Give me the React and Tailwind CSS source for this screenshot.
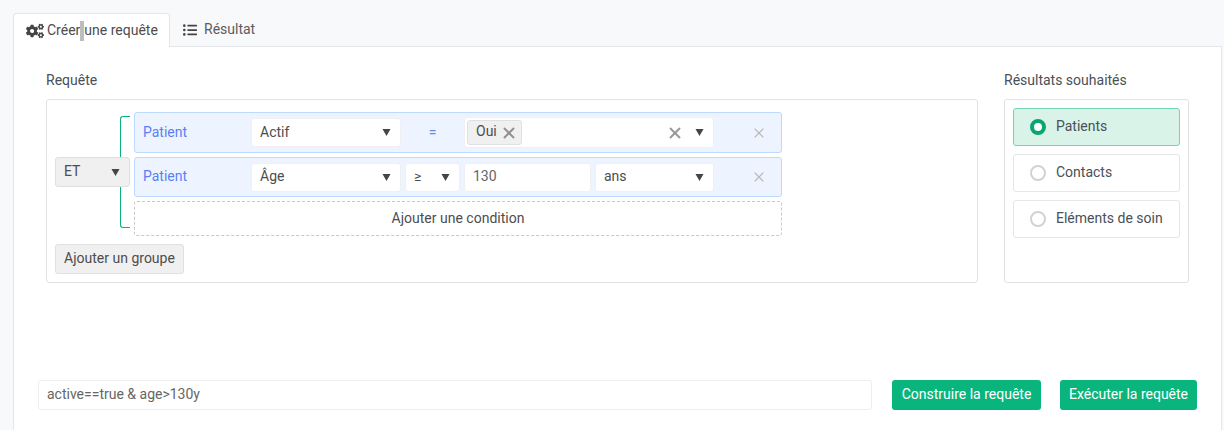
import { FaCogs, FaListUl } from 'react-icons/fa';
import { X } from 'lucide-react';

function Caret({ className = "" }) {
  return (
    <svg width="9" height="7" viewBox="0 0 9 7" className={`shrink-0 ${className}`}>
      <path d="M0.5 0h8L4.5 7z" fill="#454545" />
    </svg>
  );
}

function Select({ label, className = "" }) {
  return (
    <div className={`h-[29px] shrink-0 bg-white border border-[#eef0f3] rounded-[3px] flex items-center justify-between pl-2 pr-[9px] text-[#4d4d4d] ${className}`}>
      <span className="pb-px">{label}</span>
      <Caret />
    </div>
  );
}

function Remove() {
  return (
    <div className="w-[67px] shrink-0 flex items-center pl-[37px]">
      <X size={16} strokeWidth={1.7} className="text-[#b8b8b8]" />
    </div>
  );
}

function Radio({ label, active }) {
  return (
    <div className={`h-[38px] rounded-[3px] border flex items-center pl-4 gap-[10px] text-[#495057] ${active ? 'bg-[#d9f3e9] border-[#74d6b0]' : 'bg-white border-[#e4e6ea]'}`}>
      <span className={`w-4 h-4 rounded-full bg-white ${active ? 'border-[4px] border-[#0aa574]' : 'border-2 border-[#d2d2d2]'}`} />
      <span className="pb-[2px]">{label}</span>
    </div>
  );
}

export default function App() {
  return (
    <div className="w-[1224px] h-[430px] overflow-hidden bg-[#f8f9fb] pt-[13px] pl-[13px] text-[14px] font-['Roboto',sans-serif] text-[#495057]">
      {/* Tabs */}
      <div className="flex h-[34px] relative z-10 w-[1209px] border-b border-[#e4e6ea]">
        <div className="h-[34px] w-[157px] bg-white border border-b-0 border-[#e4e6ea] rounded-t-[4px] flex items-center pl-3 gap-[3px] text-[#4d4d4d]">
          <FaCogs size={18} className="text-[#444]" />
          <span className="flex items-center">Créer<span className="w-1 h-5 bg-[#bdbdbd]" />une requête</span>
        </div>
        <div className="h-[33px] flex items-center pl-[13px] gap-[7px] text-[#5c5c5c]">
          <FaListUl size={14} className="text-[#444]" />
          <span>Résultat</span>
        </div>
      </div>

      {/* Panel */}
      <div className="w-[1209px] h-[400px] -mt-px bg-white border-x border-[#e4e6ea] pl-6 pr-6">
        <div className="flex pt-[24px] pl-2">
          <div className="w-[932px]">
            <div className="h-[20px] leading-[20px] mb-[9px]">Requête</div>
            <div className="h-[184px] border border-[#e0e2e6] rounded-[3px] pl-2 pt-3">
              <div className="flex">
                <div className="relative z-10 w-[75px] h-[30px] mt-[45px] bg-[#f0f0f0] border border-[#e0e0e0] rounded-[3px] flex items-center justify-between pl-2 pr-[9px] text-[#4d4d4d]">
                  <span className="pb-px">ET</span>
                  <Caret />
                </div>
                <div className="relative ml-1 w-[648px]">
                  <div className="absolute -left-[14px] top-1 h-[112px] w-[10px] border border-r-0 border-[#0bb07b] rounded-l-[3px]" />
                  <div className="h-[41px] bg-[#edf4ff] border border-[#bcd9ff] rounded-[3px] flex items-center pl-2">
                    <span className="w-[108px] shrink-0 text-[#5b7ff2]">Patient</span>
                    <Select label="Actif" className="w-[150px]" />
                    <span className="w-[63px] shrink-0 text-center text-[#5b8cf2]">=</span>
                    <div className="w-[250px] shrink-0 h-[31px] bg-white border border-[#eef0f3] rounded-[3px] flex items-center pl-[2px] pr-[9px]">
                      <div className="h-[25px] w-[55px] bg-[#f0f0f0] border border-[#e0e0e0] rounded-[3px] flex items-center pl-2 gap-[3px] text-[#4d4d4d]">
                        <span className="pb-[2px]">Oui</span>
                        <X size={18} strokeWidth={2.6} className="text-[#919191]" />
                      </div>
                      <X size={18} strokeWidth={2.6} className="text-[#999] ml-auto mr-[11px]" />
                      <Caret />
                    </div>
                    <Remove />
                  </div>
                  <div className="h-10 mt-1 bg-[#edf4ff] border border-[#bcd9ff] rounded-[3px] flex items-center pl-2">
                    <span className="w-[108px] shrink-0 pb-px text-[#5b7ff2]">Patient</span>
                    <Select label="Âge" className="w-[150px]" />
                    <Select label="≥" className="w-[55px] ml-1" />
                    <div className="w-[127px] shrink-0 h-[29px] ml-1 bg-white border border-[#eef0f3] rounded-[3px] flex items-center pl-2 pb-px text-[#666]">130</div>
                    <Select label="ans" className="w-[119px] ml-1" />
                    <Remove />
                  </div>
                  <div className="h-[35px] mt-1 border border-dashed border-[#c8c8c8] rounded-[3px] flex items-center justify-center text-[#4d4d4d]">
                    Ajouter une condition
                  </div>
                </div>
              </div>
              <div className="mt-2 w-[129px] h-[30px] bg-[#f0f0f0] border border-[#e0e0e0] rounded-[3px] flex items-center justify-center pb-px text-[#4d4d4d]">
                Ajouter un groupe
              </div>
            </div>
          </div>

          <div className="w-[185px] ml-[26px]">
            <div className="h-[20px] leading-[20px] mb-[9px]">Résultats souhaités</div>
            <div className="h-[184px] border border-[#e0e2e6] rounded-[3px] px-2 pt-2 flex flex-col gap-2">
              <Radio label="Patients" active />
              <Radio label="Contacts" />
              <Radio label="Eléments de soin" />
            </div>
          </div>
        </div>

        {/* Bottom bar */}
        <div className="flex mt-[97px]">
          <div className="w-[834px] h-[30px] bg-white border border-[#eceef1] rounded-[3px] flex items-center pl-2 pb-px text-[#666]">
            active==true &amp; age&gt;130y
          </div>
          <button className="w-[149px] h-[30px] ml-5 pb-px bg-[#09b57d] rounded-[3px] text-white">Construire la requête</button>
          <button className="w-[137px] h-[30px] ml-[19px] pb-px bg-[#09b57d] rounded-[3px] text-white">Exécuter la requête</button>
        </div>
      </div>
    </div>
  );
}
